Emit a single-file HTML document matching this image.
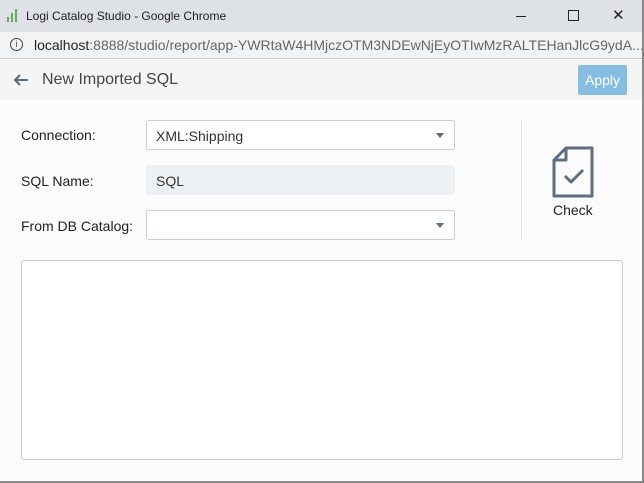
<!DOCTYPE html><html><head><style>
body{margin:0;width:644px;height:483px;overflow:hidden;font-family:"Liberation Sans",sans-serif;background:#fcfcfc;position:relative}
.abs{position:absolute}
.lbl{font-size:14px;color:#222;left:21px}
.inp{left:146px;width:309px;height:28px;border:1px solid #ccd;border-radius:3px;background:#fff;box-sizing:border-box;font-size:14px;color:#333;padding:7px 9px}
.caret{position:absolute;right:10px;top:12px;width:0;height:0;border-left:4px solid transparent;border-right:4px solid transparent;border-top:5px solid #5d6e80}
</style></head><body>
<div class="abs" style="left:0;top:0;width:644px;height:32px;background:#dee1e6"></div>
<svg class="abs" style="left:6px;top:8px" width="14" height="16"><g fill="#6a6"><rect x="1" y="9" width="2" height="5"/><rect x="5" y="5" width="2" height="9"/><rect x="9" y="1" width="2" height="13"/></g></svg>
<div class="abs" style="left:26px;top:9px;font-size:12px;color:#222">Logi Catalog Studio - Google Chrome</div>
<div class="abs" style="left:516px;top:16px;width:10px;height:1px;background:#222"></div>
<div class="abs" style="left:568px;top:10px;width:9px;height:9px;border:1px solid #222"></div>
<div class="abs" style="left:612px;top:6px;font-size:15px;color:#222">✕</div>
<div class="abs" style="left:0;top:32px;width:644px;height:26px;background:#f1f3f4;border-bottom:1px solid #ccc"></div>
<div class="abs" style="left:10px;top:38px;width:11px;height:11px;border:1.3px solid #444;border-radius:50%;font-size:9px;text-align:center;line-height:11px;color:#444">i</div>
<div class="abs" style="left:34px;top:37px;font-size:14px;color:#666;white-space:nowrap"><span style="color:#222">localhost</span>:8888/studio/report/app-YWRtaW4HMjczOTM3NDEwNjEyOTIwMzRALTEHanJlcG9ydA...</div>
<div class="abs" style="left:0;top:59px;width:644px;height:41px;background:#f4f5f4"></div>
<svg class="abs" style="left:13px;top:73px" width="16" height="14" fill="none" stroke="#5d6e80" stroke-width="2"><path d="M15 7H2M7 2L2 7l5 5"/></svg>
<div class="abs" style="left:42px;top:71px;font-size:16px;color:#444">New Imported SQL</div>
<div class="abs" style="left:578px;top:65px;width:49px;height:30px;background:#86bde0;border-radius:2px;color:#fff;font-size:14px;text-align:center;line-height:30px">Apply</div>
<div class="abs lbl" style="top:127px">Connection:</div>
<div class="abs inp" style="top:120px;height:30px">XML:Shipping<div class="caret"></div></div>
<div class="abs lbl" style="top:173px">SQL Name:</div>
<div class="abs inp" style="top:165px;height:30px;background:#eef1f4;border-color:#eef1f4">SQL</div>
<div class="abs lbl" style="top:218px">From DB Catalog:</div>
<div class="abs inp" style="top:210px;height:30px"><div class="caret"></div></div>
<div class="abs" style="left:521px;top:120px;width:1px;height:120px;background:#e3e3e3"></div>
<svg class="abs" style="left:550px;top:144px" width="46" height="56" fill="none" stroke="#5d6e80" stroke-width="3" stroke-linejoin="round"><path d="M16 4H42V52H4V16Z M16 4V16H4"/><path d="M15 32l6 6l12-12"/></svg>
<div class="abs" style="left:553px;top:202px;font-size:14px;color:#222">Check</div>
<div class="abs" style="left:21px;top:260px;width:602px;height:200px;border:1px solid #ccc;border-radius:3px;background:#fff;box-sizing:border-box"></div>
<div class="abs" style="left:642px;top:0;width:2px;height:483px;background:#888"></div>
<div class="abs" style="left:0;top:481px;width:644px;height:2px;background:#888"></div>
</body></html>
